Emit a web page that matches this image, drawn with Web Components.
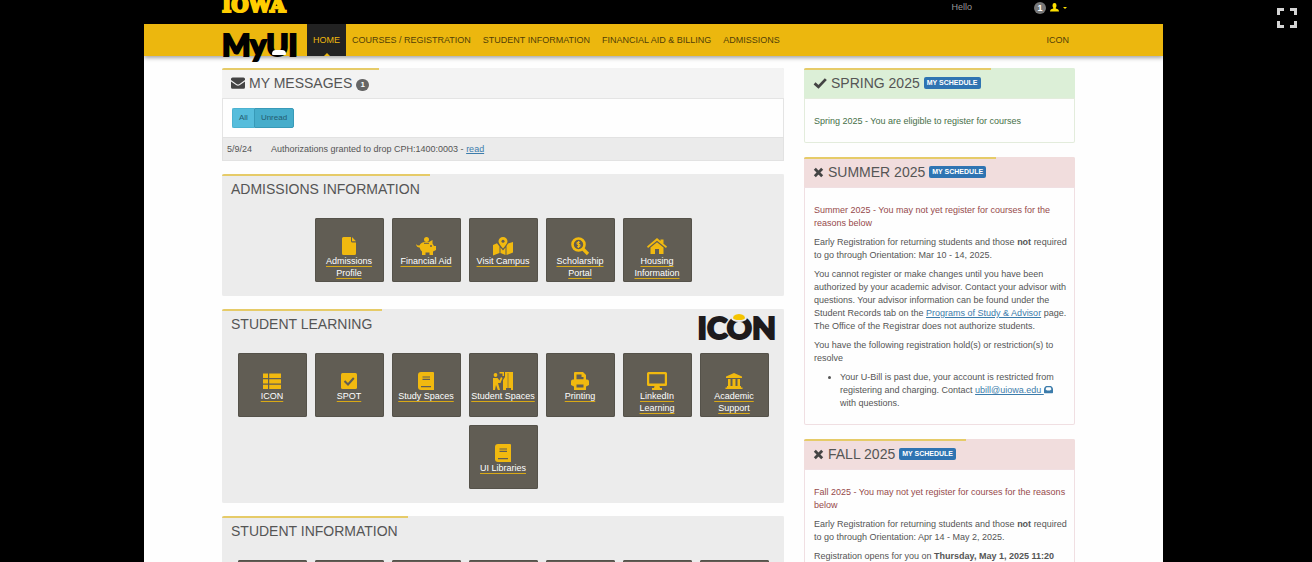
<!DOCTYPE html>
<html lang="en">
<head>
<meta charset="utf-8">
<title>MyUI</title>
<style>
  html, body {
    margin: 0;
    height: 100%;
    overflow: hidden;
    background: #000;
  }

  body {
    font: 9px/13px "Liberation Sans", Arial, sans-serif;
    color: #555;
  }

  p {
    margin: 0 0 6px;
  }

  p:last-child {
    margin-bottom: 0;
  }

  ul {
    margin: 0;
    padding-left: 26px;
  }

  my-panel a {
    color: #3c7cab;
  }

  .ok {
    color: #466f48;
  }

  .warn {
    color: #964a4b;
  }
</style>
</head>
<body>
<my-portal>
  <my-topbar slot="top"></my-topbar>
  <my-nav slot="nav">
    <my-nav-item active>HOME</my-nav-item>
    <my-nav-item>COURSES / REGISTRATION</my-nav-item>
    <my-nav-item>STUDENT INFORMATION</my-nav-item>
    <my-nav-item>FINANCIAL AID &amp; BILLING</my-nav-item>
    <my-nav-item>ADMISSIONS</my-nav-item>
    <my-nav-item slot="end">ICON</my-nav-item>
  </my-nav>

  <my-panel slot="main" tone="plain" icon="envelope" heading="MY MESSAGES" count="1" flush>
    <my-messages></my-messages>
  </my-panel>

  <my-panel slot="main" tone="tiles" heading="ADMISSIONS INFORMATION">
    <my-tile icon="file">Admissions Profile</my-tile>
    <my-tile icon="piggy">Financial Aid</my-tile>
    <my-tile icon="map">Visit Campus</my-tile>
    <my-tile icon="search">Scholarship Portal</my-tile>
    <my-tile icon="home">Housing Information</my-tile>
  </my-panel>

  <my-panel slot="main" tone="tiles" heading="STUDENT LEARNING">
    <icon-logo slot="logo"></icon-logo>
    <my-tile icon="list">ICON</my-tile>
    <my-tile icon="tick">SPOT</my-tile>
    <my-tile icon="book">Study Spaces</my-tile>
    <my-tile icon="door">Student Spaces</my-tile>
    <my-tile icon="print">Printing</my-tile>
    <my-tile icon="desktop">LinkedIn Learning</my-tile>
    <my-tile icon="bank">Academic Support</my-tile>
    <my-tile icon="book">UI Libraries</my-tile>
  </my-panel>

  <my-panel slot="main" tone="tiles" heading="STUDENT INFORMATION">
    <my-tile></my-tile>
    <my-tile></my-tile>
    <my-tile></my-tile>
    <my-tile></my-tile>
    <my-tile></my-tile>
    <my-tile></my-tile>
    <my-tile></my-tile>
  </my-panel>

  <my-panel slot="side" tone="success" icon="check" heading="SPRING 2025" schedule>
    <p class="ok">Spring 2025 - You are eligible to register for courses</p>
  </my-panel>

  <my-panel slot="side" tone="danger" icon="times" heading="SUMMER 2025" schedule>
    <p class="warn">Summer 2025 - You may not yet register for courses for the reasons below</p>
    <p>Early Registration for returning students and those <b>not</b> required to go through Orientation: Mar 10 - 14, 2025.</p>
    <p>You cannot register or make changes until you have been authorized by your academic advisor. Contact your advisor with questions. Your advisor information can be found under the Student Records tab on the <a href="#">Programs of Study &amp; Advisor</a> page. The Office of the Registrar does not authorize students.</p>
    <p>You have the following registration hold(s) or restriction(s) to resolve</p>
    <ul>
      <li>Your U-Bill is past due, your account is restricted from registering and charging. Contact <a href="#">ubill@uiowa.edu <my-icon name="mail" size="9"></my-icon></a> with questions.</li>
    </ul>
  </my-panel>

  <my-panel slot="side" tone="danger" icon="times" heading="FALL 2025" schedule>
    <p class="warn">Fall 2025 - You may not yet register for courses for the reasons below</p>
    <p>Early Registration for returning students and those <b>not</b> required to go through Orientation: Apr 14 - May 2, 2025.</p>
    <p>Registration opens for you on <b>Thursday, May 1, 2025 11:20</b></p>
  </my-panel>
</my-portal>
<fullscreen-button></fullscreen-button>

<script>
(() => {
  // Icon bodies, all on an 18 x 18 grid
  const ICONS = {
    envelope: '<path d="M0 4Q0 2 2 2H16Q18 2 18 4V5L10.500 10.500Q9 11.500 7.500 10.500L0 5Z"/><path d="M0 7L7 12Q9 13.200 11 12L18 7V14.500Q18 16.500 16 16.500H2Q0 16.500 0 14.500Z"/>',
    check: '<path d="M2 9.500L7 14L16.500 4" fill="none" stroke="currentColor" stroke-width="3.600"/>',
    times: '<path d="M3 3L15 15M15 3L3 15" fill="none" stroke="currentColor" stroke-width="4.600"/>',
    file: '<path d="M2 1.500Q2 0 3.500 0H11V4Q11 5.500 12.500 5.500H16V16.500Q16 18 14.500 18H3.500Q2 18 2 16.500Z"/><path d="M12 0L16 4.300H12Z"/>',
    piggy: '<circle cx="9.500" cy="2.500" r="2.500"/><path d="M-1 7Q.5 9 2.500 8.500Q4 5 8 5H12L15.500 3V6.500L17 9H19V13L16 14.500V18H12.500V15.500H8.500V18H5V14.500Q3 12.500 2.600 10.500Q-.5 10.500-1 7Z"/><circle cx="14" cy="9" r="1" fill="#615d54"/><path d="M7 6.300H12" stroke="#615d54" stroke-width="1"/>',
    map: '<path d="M9 0A4.500 4.500 0 0 1 13.500 4.500C13.500 6.500 11 9 9 11.500C7 9 4.500 6.500 4.500 4.500A4.500 4.500 0 0 1 9 0Z"/><circle cx="9" cy="4.300" r="1.500" fill="#615d54"/><path d="M-1 8L3 6.300L5.500 9.500V16L-1 18.500ZM6.500 10.500L9 13.500L11.500 10.500V18L6.500 16ZM12.500 9L14 6.500L19 5V15.500L12.500 18Z"/>',
    search: '<circle cx="7.500" cy="7.500" r="6" fill="none" stroke="currentColor" stroke-width="2.600"/><path d="M12 12L17 17" stroke="currentColor" stroke-width="3.200"/><path d="M9 5.200H7Q6 5.200 6 6.200T7 7.400H8Q9 7.400 9 8.500T8 9.700H6M7.500 4V11" fill="none" stroke="currentColor" stroke-width="1.100"/>',
    home: '<path d="M-1 9.500L9 1L12.500 4V2.500H15.500V6.700L19 9.500L18 11L9 3.700L0 11Z"/><path d="M2.500 10.500L9 5.200L15.500 10.500V17H11V12H7V17H2.500Z"/>',
    list: '<path d="M0 1.500H5V6H0ZM6.200 1.500H18V6H6.200ZM0 7.200H5V11.500H0ZM6.200 7.200H18V11.500H6.200ZM0 12.700H5V17H0ZM6.200 12.700H18V17H6.200Z"/>',
    tick: '<rect x="1" y="1" width="16" height="16" rx="1.500"/><path d="M4.500 9L8 12.500L13.800 6" fill="none" stroke="#615d54" stroke-width="2"/>',
    book: '<path d="M4 0H16Q17 0 17 1V18H4Q1 18 1 15V3Q1 0 4 0Z"/><path d="M5.500 5H13M5.500 7.300H13M4 14.600H14" stroke="#615d54" stroke-width="1.200"/>',
    door: '<circle cx="1.500" cy="3" r="1.900"/><path d="M-1 6H3.500L5.500 8.500L7 5L8.500 6L6.500 11H4L6 18H3.800L2 13L1 18H-1Z"/><path d="M5.500 0H10V4H8.500V1.500H5.500ZM11 0H19V18H17V16H12V18H9V8L11 5Z"/><path d="M14 1V16" stroke="#615d54" stroke-width=".6"/>',
    print: '<path d="M3 1Q3 0 4 0H12L15 3V8H3Z"/><path d="M5.500 2.500H10.500V5H12.500V7.500H5.500Z" fill="#615d54"/><path d="M2 7.500H16Q18 7.500 18 9.500V13L15 14.500V18H3V14.500L0 13V9.500Q0 7.500 2 7.500Z"/><path d="M5.500 12.500H12.500V15.500H5.500Z" fill="#615d54"/>',
    desktop: '<path fill-rule="evenodd" d="M.5 0H17.500Q19 0 19 1.500V12.500Q19 14 17.500 14H11.500L12 16H14V18H4V16H6L6.500 14H.5Q-1 14-1 12.500V1.500Q-1 0 .5 0ZM1.200 2.200V11.500H16.800V2.200Z"/>',
    bank: '<path d="M9 1L17 4.500V6H1V4.500ZM3 7H5.500V14H7.500V7H10.500V14H12.500V7H15V14H16V15.500H17.500V17H.5V15.500H2V14H3Z"/>',
    mail: '<path fill-rule="evenodd" d="M4 4H14Q18 7 18 10V17Q18 18.500 16.500 18.500H1.500Q0 18.500 0 17V10Q0 7 4 4ZM5 6.500L3 10.500L6 13H12L15 10.500L13 6.500Z"/>',
    user: '<path d="M9 0Q13 0 13 4.500Q13 7.500 11.500 9.500V11Q18 12 18 17H0Q0 12 6.500 11V9.500Q5 7.500 5 4.500Q5 0 9 0Z"/>'
  };

  /**
   * Base class, puts the markup in an open shadow root
   */
  class MyElement extends HTMLElement {
    connectedCallback () {
      if (this.shadowRoot) {
        return;
      }
      const template = document.createElement('template');
      template.innerHTML = this.render();
      this.attachShadow({ mode: 'open' })
        .appendChild(template.content.cloneNode(true));
    }
  }

  customElements.define('my-icon',
    class MyIcon extends MyElement {
      render () {
        const size = this.getAttribute('size') || 18;
        return `
          <style>
            :host { display: inline-block; line-height: 0; vertical-align: baseline; }
            svg { fill: currentColor; overflow: visible; }
          </style>
          <svg width="${size}" height="${size}" viewBox="0 0 18 18" aria-hidden="true">${ICONS[this.getAttribute('name')] || ''}</svg>`;
      }
    }
  );

  /**
   * White page with header, navigation and two columns
   */
  customElements.define('my-portal',
    class MyPortal extends MyElement {
      render () {
        return `
          <style>
            :host {
              --left: 78px;
              --right: 88px;
              display: flex;
              flex-direction: column;
              min-height: 100%;
              margin: 0 149px 0 144px;
              background: #fefefe;
            }
            main {
              display: grid;
              grid-template-columns: minmax(0, 562fr) minmax(0, 271fr);
              gap: 20px;
              padding: 12px var(--right) 20px var(--left);
            }
            section {
              display: flex;
              flex-direction: column;
              gap: 13px;
            }
            .side { gap: 14px; }
          </style>
          <slot name="top"></slot>
          <slot name="nav"></slot>
          <main>
            <section><slot name="main"></slot></section>
            <section class="side"><slot name="side"></slot></section>
          </main>`;
      }
    }
  );

  customElements.define('my-topbar',
    class MyTopbar extends MyElement {
      render () {
        return `
          <style>
            :host {
              display: flex;
              justify-content: space-between;
              height: 24px;
              padding: 0 96px 0 var(--left);
              background: #000;
              color: #999;
            }
            .logo {
              height: 15px;
              display: flex;
              align-items: flex-end;
              font: bold 20px/20px "DejaVu Serif", serif;
              color: #ffcd00;
              -webkit-text-stroke: 2px #ffcd00;
              text-decoration: none;
            }
            .user {
              display: flex;
              align-items: center;
              gap: 4px;
              height: 15px;
            }
            .hello { margin-right: 58px; }
            .count {
              width: 12px;
              border-radius: 6px;
              background: #777;
              color: #fff;
              font-weight: bold;
              line-height: 12px;
              text-align: center;
            }
            my-icon { color: #fde000; }
            .caret {
              border: 2px solid transparent;
              border-top-color: #fde000;
              border-bottom: 0;
            }
          </style>
          <a class="logo" href="#">IOWA</a>
          <div class="user">
            <span class="hello">Hello</span>
            <span class="count">1</span>
            <my-icon name="user" size="9"></my-icon>
            <span class="caret"></span>
          </div>`;
      }
    }
  );

  customElements.define('my-nav',
    class MyNav extends MyElement {
      render () {
        return `
          <style>
            :host {
              display: block;
              position: relative;
              background: #ecb70e;
              box-shadow: 0 2px 4px rgba(0, 0, 0, .35);
            }
            nav {
              display: flex;
              height: 32px;
              padding: 0 var(--right) 0 var(--left);
            }
            .logo {
              position: relative;
              display: flex;
              width: 85px;
              font: 900 30px/40px Lato, sans-serif;
              color: #000;
              -webkit-text-stroke: 2px #000;
              text-decoration: none;
            }
            .dome {
              position: absolute;
              left: 50px;
              top: 26px;
              width: 14px;
              height: 5px;
              border-radius: 7px 7px 2px 2px;
              background: #fff;
            }
          </style>
          <nav>
            <a class="logo" href="#"><span>My</span><span>UI</span><i class="dome"></i></a>
            <slot></slot>
            <slot name="end"></slot>
          </nav>`;
      }
    }
  );

  customElements.define('my-nav-item',
    class MyNavItem extends MyElement {
      render () {
        return `
          <style>
            :host { display: block; }
            :host([slot="end"]) { margin-left: auto; }
            a {
              position: relative;
              display: block;
              padding: 0 6px;
              line-height: 32px;
              color: #513f08;
              text-decoration: none;
            }
            :host([active]) a {
              background: #222;
              color: #ecb70e;
            }
            :host([active]) a::after {
              content: "";
              position: absolute;
              left: 50%;
              bottom: 0;
              margin-left: -3px;
              border: 3px solid transparent;
              border-bottom-color: #ecb70e;
              border-top: 0;
            }
          </style>
          <a href="#"><slot></slot></a>`;
      }
    }
  );

  /**
   * Panel with a heading, the gold line is as wide as the heading
   */
  customElements.define('my-panel',
    class MyPanel extends MyElement {
      render () {
        const icon = this.getAttribute('icon');
        const count = this.getAttribute('count');
        return `
          <style>
            :host {
              --edge: #e4e4e4;
              --head: #f3f3f3;
              display: block;
              box-sizing: border-box;
              border-radius: 2px;
              background: #fefefe;
              box-shadow: inset 0 0 0 1px var(--edge);
            }
            :host([tone="success"]) { --edge: #e3ecdc; --head: #dcefd7; }
            :host([tone="danger"]) { --edge: #f0dfe2; --head: #f1dddd; }
            :host([tone="tiles"]) { --edge: #ececec; --head: #ececec; background: #ececec; }
            header {
              display: flex;
              justify-content: space-between;
              align-items: flex-start;
              height: 30px;
              border-bottom: 1px solid var(--edge);
              border-radius: 2px 2px 0 0;
              background: var(--head);
            }
            h2 {
              display: flex;
              align-items: center;
              gap: 4px;
              height: 26px;
              margin: 0;
              padding: 0 10px 0 9px;
              border-top: 2px solid #e6cb68;
              border-radius: 2px 0 0 0;
              font-size: 14px;
              font-weight: normal;
              line-height: 26px;
              color: #555;
              white-space: nowrap;
            }
            h2 my-icon { color: #444; }
            .count {
              min-width: 13px;
              margin-top: 4px;
              border-radius: 6px;
              background: #666;
              color: #fff;
              font: bold 8px/12px "Liberation Sans", sans-serif;
              text-align: center;
            }
            .schedule {
              padding: 0 3px;
              border-radius: 2px;
              background: #2f74b2;
              color: #fff;
              font: bold 7px/12px "Liberation Sans", sans-serif;
              text-decoration: none;
            }
            .body { padding: 16px 4px 15px 10px; }
            :host([flush]) .body { padding: 0; }
            :host([tone="tiles"]) .body {
              display: flex;
              flex-wrap: wrap;
              justify-content: center;
              gap: 8px;
              padding: 13px 12px 14px;
            }
          </style>
          <header>
            <h2>
              ${icon ? `<my-icon name="${icon}" size="${icon === 'times' ? 11 : 14}"></my-icon>` : ''}
              <span>${this.getAttribute('heading')}</span>
              ${count ? `<span class="count">${count}</span>` : ''}
              ${this.hasAttribute('schedule') ? '<a class="schedule" href="#">MY SCHEDULE</a>' : ''}
            </h2>
            <slot name="logo"></slot>
          </header>
          <div class="body"><slot></slot></div>`;
      }
    }
  );

  customElements.define('my-messages',
    class MyMessages extends MyElement {
      render () {
        return `
          <style>
            :host { display: block; }
            .filter {
              display: flex;
              padding: 9px 10px;
            }
            button {
              height: 20px;
              padding: 0 6px;
              border: 1px solid #4bb2d0;
              border-right: 0;
              border-radius: 2px 0 0 2px;
              background: #56bddc;
              color: #235c70;
              font: 8px/18px "Liberation Sans", sans-serif;
            }
            button[aria-pressed="true"] {
              border: 1px solid #389ab8;
              border-radius: 0 2px 2px 0;
              background: #46adcb;
            }
            table {
              width: 100%;
              border-collapse: collapse;
              background: #ebebeb;
              box-shadow: inset 0 0 0 1px #e2e2e2;
            }
            td {
              height: 24px;
              padding: 0 0 0 5px;
            }
            .date { width: 39px; }
            a { color: #3c7cab; }
          </style>
          <div class="filter">
            <button type="button" aria-pressed="false">All</button>
            <button type="button" aria-pressed="true">Unread</button>
          </div>
          <table>
            <tr>
              <td class="date">5/9/24</td>
              <td>Authorizations granted to drop CPH:1400:0003 - <a href="#">read</a></td>
            </tr>
          </table>`;
      }
    }
  );

  customElements.define('my-tile',
    class MyTile extends MyElement {
      render () {
        return `
          <style>
            :host { display: block; }
            a {
              display: flex;
              flex-direction: column;
              align-items: center;
              box-sizing: border-box;
              width: 69px;
              height: 64px;
              padding-top: 19px;
              border-radius: 2px;
              background: #615d54;
              box-shadow: inset 0 0 0 1px #55524a;
              color: #f1b90f;
              text-decoration: none;
            }
            span {
              padding: 0 2px;
              color: #fff;
              line-height: 12px;
              text-align: center;
              text-decoration: underline #d9a916;
              text-underline-offset: 2px;
            }
          </style>
          <a href="#">
            <my-icon name="${this.getAttribute('icon') || ''}"></my-icon>
            <span><slot></slot></span>
          </a>`;
      }
    }
  );

  customElements.define('icon-logo',
    class IconLogo extends MyElement {
      render () {
        return `
          <style>
            :host {
              display: block;
              margin-right: 8px;
              font: 900 31px/36px Lato, sans-serif;
              color: #1d1a1c;
              -webkit-text-stroke: 2px #1d1a1c;
            }
            span { position: relative; }
            i {
              position: absolute;
              left: 50%;
              top: 6px;
              width: 12px;
              height: 6px;
              margin-left: -8px;
              border: 2px solid #ececec;
              border-top: 0;
              border-radius: 50%;
              background: #f5c400;
            }
          </style>
          IC<span>O<i></i></span>N`;
      }
    }
  );

  customElements.define('fullscreen-button',
    class FullscreenButton extends MyElement {
      render () {
        return `
          <style>
            :host {
              position: absolute;
              top: 7px;
              right: 14px;
              display: block;
            }
            button {
              display: block;
              padding: 0;
              border: 0;
              background: none;
              line-height: 0;
            }
          </style>
          <button type="button" aria-label="Full screen">
            <svg width="22" height="22" viewBox="0 0 22 22" fill="none" stroke="#d4d4d4" stroke-width="3">
              <path d="M2.500 8V2.500H8M14 2.500H19.500V8M19.500 14V19.500H14M8 19.500H2.500V14"/>
            </svg>
          </button>`;
      }
    }
  );
})();
</script>
</body>
</html>
